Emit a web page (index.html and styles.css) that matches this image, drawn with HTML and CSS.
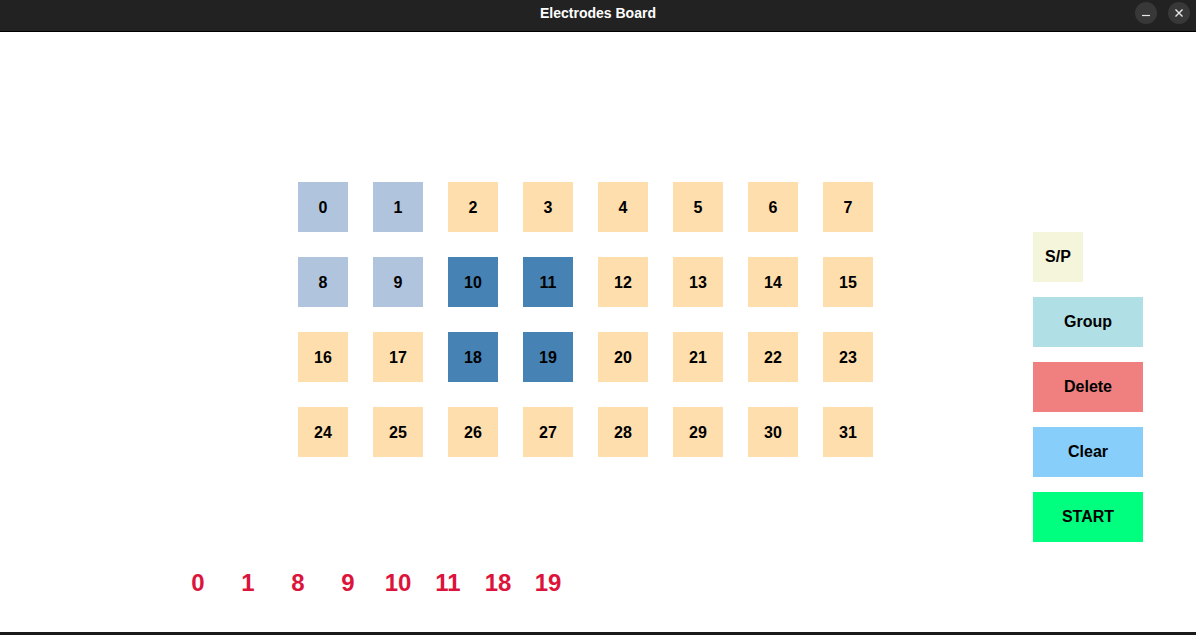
FILE: index.html
```html
<!DOCTYPE html>
<html lang="en">
<head>
  <meta charset="UTF-8" />
  <title>Electrodes Board</title>
  <link rel="stylesheet" href="styles.css">
</head>
<body>
  <header class="titlebar">
    <span class="titulo">Electrodes Board</span>
    <div class="ventana-botones">
      <span class="ventana-btn">
        <svg width="10" height="10" viewBox="0 0 10 10"><line x1="1" y1="7.5" x2="9" y2="7.5" stroke="#e8e8e8" stroke-width="1.2"/></svg>
      </span>
      <span class="ventana-btn">
        <svg width="10" height="10" viewBox="0 0 10 10"><path d="M1.5 1.5 L8.5 8.5 M8.5 1.5 L1.5 8.5" stroke="#e8e8e8" stroke-width="1.4"/></svg>
      </span>
    </div>
  </header>

  <main class="contenido">
    <section class="tablero">
      <div class="grilla">
        <div class="celda sel">0</div>
        <div class="celda sel">1</div>
        <div class="celda">2</div>
        <div class="celda">3</div>
        <div class="celda">4</div>
        <div class="celda">5</div>
        <div class="celda">6</div>
        <div class="celda">7</div>
        <div class="celda sel">8</div>
        <div class="celda sel">9</div>
        <div class="celda grupo">10</div>
        <div class="celda grupo">11</div>
        <div class="celda">12</div>
        <div class="celda">13</div>
        <div class="celda">14</div>
        <div class="celda">15</div>
        <div class="celda">16</div>
        <div class="celda">17</div>
        <div class="celda grupo">18</div>
        <div class="celda grupo">19</div>
        <div class="celda">20</div>
        <div class="celda">21</div>
        <div class="celda">22</div>
        <div class="celda">23</div>
        <div class="celda">24</div>
        <div class="celda">25</div>
        <div class="celda">26</div>
        <div class="celda">27</div>
        <div class="celda">28</div>
        <div class="celda">29</div>
        <div class="celda">30</div>
        <div class="celda">31</div>
      </div>

      <div class="seleccion">
        <span>0</span><span>1</span><span>8</span><span>9</span>
        <span>10</span><span>11</span><span>18</span><span>19</span>
      </div>
    </section>

    <aside class="acciones">
      <button class="btn btn-sp">S/P</button>
      <button class="btn btn-group">Group</button>
      <button class="btn btn-delete">Delete</button>
      <button class="btn btn-clear">Clear</button>
      <button class="btn btn-start">START</button>
    </aside>
  </main>

  <footer class="terminal"></footer>
</body>
</html>
```

FILE: styles.css
```css
* {
  margin: 0;
  padding: 0;
  box-sizing: border-box;
}

body {
  font-family: "Liberation Sans", Arial, sans-serif;
  width: 1196px;
  height: 635px;
  overflow: hidden;
  background: #ffffff;
}

.titlebar {
  height: 32px;
  background: #222222;
  border-bottom: 1px solid #000000;
  display: flex;
  align-items: center;
  justify-content: center;
  position: relative;
}

.titulo {
  color: #ffffff;
  font-size: 14px;
  font-weight: bold;
  margin-top: -5px;
}

.ventana-botones {
  position: absolute;
  right: 6px;
  top: 2px;
  display: flex;
  gap: 11px;
}

.ventana-btn {
  width: 22px;
  height: 22px;
  border-radius: 50%;
  background: #383838;
  display: flex;
  align-items: center;
  justify-content: center;
}

.contenido {
  height: 600px;
  display: flex;
}

.tablero {
  width: 1033px;
}

.grilla {
  display: grid;
  grid-template-columns: repeat(8, 50px);
  grid-auto-rows: 50px;
  gap: 25px;
  margin-left: 298px;
  margin-top: 150px;
  width: 575px;
}

.celda {
  background: #ffdead;
  display: flex;
  align-items: center;
  justify-content: center;
  padding-top: 1px;
  font-size: 16px;
  font-weight: bold;
  color: #000000;
}

.celda.sel {
  background: #b0c4de;
}

.celda.grupo {
  background: #4682b4;
}

.seleccion {
  display: flex;
  margin-left: 173px;
  margin-top: 111px;
}

.seleccion span {
  width: 50px;
  text-align: center;
  color: #dc143c;
  font-size: 24px;
  font-weight: bold;
  line-height: 30px;
}

.acciones {
  display: flex;
  flex-direction: column;
  align-items: flex-start;
  gap: 15px;
  padding-top: 200px;
}

.btn {
  width: 110px;
  height: 50px;
  border: none;
  font-family: "Liberation Sans", Arial, sans-serif;
  font-size: 16px;
  font-weight: bold;
  color: #000000;
  cursor: pointer;
}

.btn-sp {
  width: 50px;
  background: #f5f5dc;
}

.btn-group {
  background: #b0e0e6;
}

.btn-delete {
  background: #f08080;
}

.btn-clear {
  background: #87cefa;
}

.btn-start {
  background: #00ff7f;
}

.terminal {
  height: 3px;
  background: #1a1a1a;
}
```
